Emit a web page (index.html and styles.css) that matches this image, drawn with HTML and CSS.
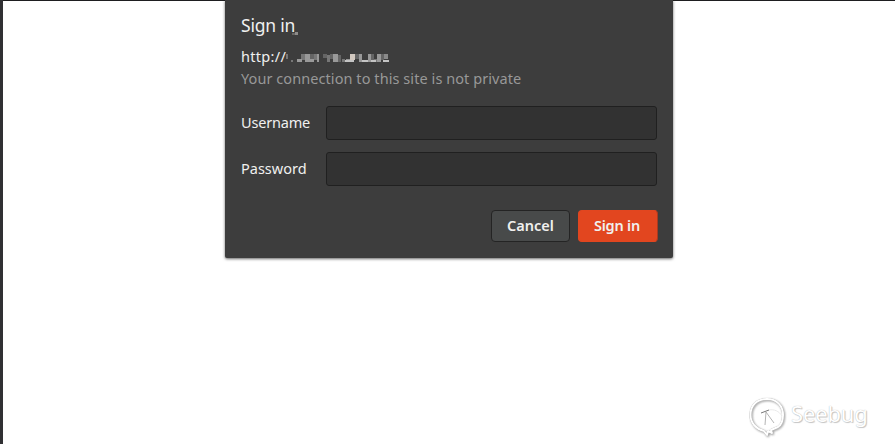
FILE: index.html
```html
<!DOCTYPE html>
<html lang="en">
<head>
<meta charset="utf-8">
<title>Sign in</title>
<link rel="stylesheet" href="styles.css">
</head>
<body>
<main class="page">
  <form class="dialog">
    <h1 class="title"><span>Sign in</span><svg class="speck" width="6" height="4" viewBox="0 0 6 4"><path fill="#686766" d="M0 2h3v2H0z"/><path fill="#8d8b89" d="M3 1h3v3H3z"/></svg></h1>
    <div class="origin"><span class="scheme">http://</span><svg class="mosaic" width="104" height="10" viewBox="0 0 104 10" shape-rendering="crispEdges">
      <path fill="#777" d="M0 0h2v5H0zM5 6h2v2H5zM15 0h4v6h-4zM28 0h3v6h-3zM41 1h3v7h-3zM56 5h3v3h-3zM88 5h3v3h-3z"/>
      <path fill="#999" d="M11 5h5v3h-5zM19 0h5v5h-5zM19 5h9v3h-9zM31 0h2v8h-2zM47 0h5v8h-5zM60 5h6v3h-6zM73 0h3v8h-3zM82 0h3v8h-3zM91 0h4v8h-4z"/>
      <path fill="#656565" d="M24 0h4v5h-4zM37 0h4v4h-4zM44 0h3v5h-3zM52 1h3v7h-3zM69 0h4v5h-4zM85 0h3v6h-3zM95 0h3v6h-3z"/>
      <path fill="#d2c8bf" d="M64 0h5v6h-5z"/><path fill="#c4c4c4" d="M59 6h9v2h-9zM76 6h6v2h-6zM85 6h5v2h-5zM97 6h6v2h-6z"/><path fill="#8a8a8a" d="M98 0h4v5h-4z"/>
    </svg></div>
    <p class="notice">Your connection to this site is not private</p>
    <div class="fields">
      <label class="label user" for="user">Username</label><input class="input" id="user" type="text">
      <label class="label pass" for="pass">Password</label><input class="input" id="pass" type="password">
    </div>
    <div class="actions">
      <button class="button" type="button"><span>Cancel</span></button>
      <button class="button primary" type="button"><span>Sign in</span></button>
    </div>
  </form>
  <div class="watermark">
    <svg class="logo" width="40" height="42" viewBox="0 0 40 42" fill="none" stroke-linejoin="round">
      <g class="rim"><path d="M15 34C7 32 1.500 26 1.500 18C1.500 8 8 2 18 2C28 2 34 9 34 18C34 24 32 28 29 30L22 33L23 36L19 34L18 38Z"/></g>
      <path class="fold" d="M20 13C25 12 30 14 33 19"/>
      <path class="needle" d="M17 15L16 28M17 15L25 26"/>
      <path class="bar" d="M12 16L20 13"/>
    </svg>
    <span class="brand">Seebug</span>
  </div>
</main>
</body>
</html>
```
FILE: styles.css
```css
* { box-sizing: border-box; }
body { margin: 0; background: #fff; overflow: hidden; }
.page {
  position: relative;
  height: 444px;
  background: linear-gradient(#1e1e20, #1e1e20) top / 100% 1px no-repeat;
  border-left: 3px solid #303033;
  font: 14.5px/22px "Noto Sans", sans-serif;
}
.dialog {
  width: 448px;
  height: 258px;
  margin-left: 222px;
  padding: 12px 15px 0 16px;
  background: #3d3d3d;
  border-radius: 0 0 2px 2px;
  box-shadow: 0 1px 3px rgba(0, 0, 0, .6);
  color: #f0f0ef;
}
.title { display: flex; align-items: flex-end; height: 26px; margin: 0; font-size: 17.5px; font-weight: 400; line-height: 26px; letter-spacing: -.2px; }
.speck { margin: 0 0 3px -3px; }
.origin { display: flex; height: 22px; margin-top: 7px; }
.scheme { width: 45px; letter-spacing: .3px; }
.mosaic { margin-top: 9px; }
.notice { margin: 0; color: #989898; letter-spacing: .07px; white-space: nowrap; }
.fields { display: grid; grid-template-columns: 85px 331px; row-gap: 12px; margin-top: 17px; }
.label { line-height: 32px; }
.user { letter-spacing: -.18px; }
.input { width: 331px; height: 34px; margin: 0; border: 1px solid #202020; border-radius: 3px; background: #323232; color: inherit; outline: 0; }
.actions { display: flex; justify-content: flex-end; gap: 8px; margin-top: 24px; }
.button { width: 79px; height: 32px; padding: 0 0 2px; border: 1px solid #242424; border-radius: 4px; background: #484a4a; color: #f0f0ee; font: 600 14.5px/22px "Noto Sans", sans-serif; }
.primary { width: 80px; padding-right: 2px; border-color: #e2461f #a93a20 #e2461f #e2461f; background: #e2461f; letter-spacing: -.2px; }
.watermark { position: absolute; left: 746px; top: 397px; display: flex; }
.rim { stroke: #fff; stroke-width: 2; filter: drop-shadow(1px 1px 1px rgba(0, 0, 0, .35)) drop-shadow(0 0 .5px #aaa); }
.fold { stroke: #e4e4e4; stroke-width: .8; }
.needle { stroke: #aaa; stroke-width: .9; }
.bar { stroke: #777; stroke-width: 1; }
.brand { margin: 2px 0 0 2px; color: #fff; font: 22px/28px "Noto Sans", sans-serif; letter-spacing: -.15px; text-shadow: 0 0 1px #aaa, 1px 1px 1px rgba(0, 0, 0, .22); }
```
